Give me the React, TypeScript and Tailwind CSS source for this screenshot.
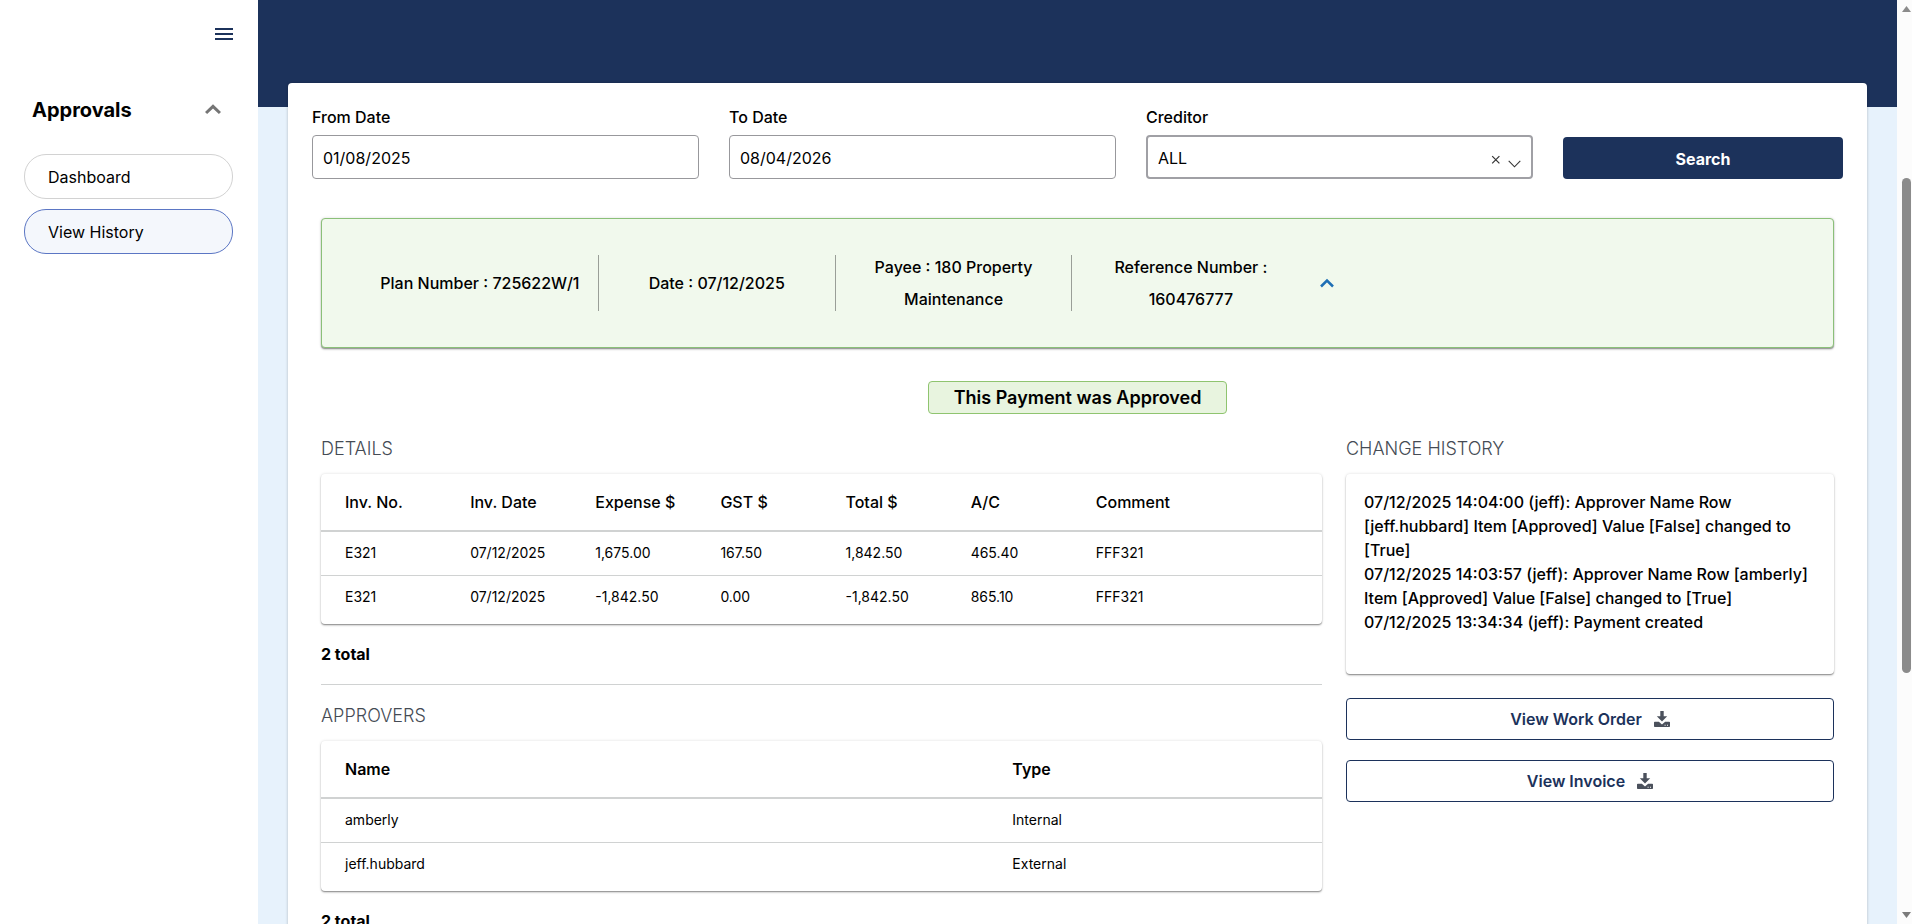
import { useState } from 'react';
import type { ReactNode } from 'react';
import clsx from 'clsx';

const invoices = [
    ['E321', '07/12/2025', '1,675.00', '167.50', '1,842.50', '465.40', 'FFF321'],
    ['E321', '07/12/2025', '-1,842.50', '0.00', '-1,842.50', '865.10', 'FFF321'],
];

const approvers = [
    ['amberly', 'Internal'],
    ['jeff.hubbard', 'External'],
];

const history = [
    '07/12/2025 14:04:00 (jeff): Approver Name Row [jeff.hubbard] Item [Approved] Value [False] changed to [True]',
    '07/12/2025 14:03:57 (jeff): Approver Name Row [amberly] Item [Approved] Value [False] changed to [True]',
    '07/12/2025 13:34:34 (jeff): Payment created',
];

const cardShadow = 'shadow-[0_1px_1px_rgba(0,0,0,0.3),0_2px_2px_rgba(0,0,0,0.12),0_0_3px_rgba(0,0,0,0.14)]';

function DownloadIcon() {
    return (
        <svg viewBox="0 0 16 16" className="size-4 fill-[#4b515c]" aria-hidden="true">
            <path d="M6.3 0h3.4v5.2h3.5L8 10.4 2.8 5.2h3.5z" />
            <path
                fillRule="evenodd"
                d="M.8 10.8h4.1L8 13.4l3.1-2.6h4.1q.8 0 .8.8v3.6q0 .8-.8.8H.8q-.8 0-.8-.8v-3.6q0-.8.8-.8zM10.6 13.8v1h1v-1zM13 13.8v1h1v-1z"
            />
        </svg>
    );
}

function SidebarLink({ active, children }: { active?: boolean; children: ReactNode }) {
    return (
        <a
            href="#"
            aria-current={active ? 'page' : undefined}
            className={clsx(
                'flex h-[45px] items-center rounded-[22px] border px-[23px] text-black',
                active ? 'border-[#5b76c4] bg-[#f4f7fc]' : 'border-[#d2d2d2] bg-white'
            )}
        >
            {children}
        </a>
    );
}

function Sidebar() {
    const [open, setOpen] = useState(true);

    return (
        <aside className="w-[258px] shrink-0 bg-white pt-[22px] pr-[25px] pl-6">
            <div className="flex justify-end">
                <button type="button" aria-label="Toggle menu" className="-mr-[3px]">
                    <svg viewBox="0 0 24 24" className="size-6 fill-[#1c325b]" aria-hidden="true">
                        <path d="M3 6h18v2H3zM3 11h18v2H3zM3 16h18v2H3z" />
                    </svg>
                </button>
            </div>
            <button
                type="button"
                onClick={() => setOpen(!open)}
                className="mt-12 flex w-full items-center justify-between px-2"
            >
                <span className="text-xl leading-8 font-bold">Approvals</span>
                <svg viewBox="0 0 24 24" className="size-6 fill-[#757575]" aria-hidden="true">
                    <path d="M12 6.2l-8 7.8 2.1 2.1L12 10.4l5.9 5.7L20 14z" />
                </svg>
            </button>
            {open && (
                <nav className="mt-7 flex flex-col gap-[10px]">
                    <SidebarLink>Dashboard</SidebarLink>
                    <SidebarLink active>View History</SidebarLink>
                </nav>
            )}
        </aside>
    );
}

function DateField({ id, label, value }: { id: string; label: string; value: string }) {
    return (
        <div className="flex flex-col gap-[6px]">
            <label htmlFor={id} className="font-medium">
                {label}
            </label>
            <input
                id={id}
                type="text"
                defaultValue={value}
                className="h-11 w-full rounded-[4px] border border-[#98989c] bg-white px-[10px] pt-[2px]"
            />
        </div>
    );
}

function Filters() {
    return (
        <form className="grid grid-cols-[387fr_387fr_387fr_280fr] items-end gap-[30px]">
            <DateField id="from-date" label="From Date" value="01/08/2025" />
            <DateField id="to-date" label="To Date" value="08/04/2026" />
            <div className="flex flex-col gap-[6px]">
                <label htmlFor="creditor" className="font-medium">
                    Creditor
                </label>
                <div className="relative">
                    <select
                        id="creditor"
                        className="block h-11 w-full appearance-none rounded-[4px] border-2 border-[#a0a0a5] bg-white px-[10px] pt-[2px]"
                    >
                        <option>ALL</option>
                    </select>
                    <div className="pointer-events-none absolute inset-y-0 right-3 flex items-center gap-[7px]">
                        <svg viewBox="0 0 10 10" className="mt-[6px] size-[10px] fill-none stroke-[#333]" aria-hidden="true">
                            <path d="M1.2 1.2l7.2 7.2M8.4 1.2L1.2 8.4" strokeWidth="1.2" />
                        </svg>
                        <svg viewBox="0 0 13 8" className="mt-[14px] h-2 w-[13px] fill-none stroke-[#333]" aria-hidden="true">
                            <path d="M.7.8l5.8 6 5.8-6" strokeWidth="1.1" />
                        </svg>
                    </div>
                </div>
            </div>
            <button type="button" className="h-[42px] rounded-[4px] bg-[#1c325b] pt-[2px] font-bold text-white">
                Search
            </button>
        </form>
    );
}

function PaymentSummary() {
    const cell = 'flex h-14 items-center justify-center';
    const divider = 'border-r border-[#9a9f98]';

    return (
        <section
            className={clsx(
                'grid grid-cols-6 items-center rounded-[4px] border border-[#8bc079] bg-[#f1f9ed] py-8 pr-[50px] pl-10 text-center leading-8 font-medium',
                cardShadow
            )}
        >
            <div className={clsx(cell, divider, 'whitespace-nowrap')}>Plan Number : 725622W/1</div>
            <div className={clsx(cell, divider, 'whitespace-nowrap')}>Date : 07/12/2025</div>
            <div className={clsx(cell, divider, 'px-8')}>Payee : 180 Property Maintenance</div>
            <div className="flex items-center justify-center px-8">Reference Number : 160476777</div>
            <button type="button" aria-label="Collapse payment" className="ml-[10px] justify-self-start">
                <svg viewBox="0 0 16 16" className="size-4 fill-none stroke-[#1f6fb5]" aria-hidden="true">
                    <path d="M2 11.5l6-6 6 6" strokeWidth="2.5" />
                </svg>
            </button>
        </section>
    );
}

function SectionTitle({ children }: { children: ReactNode }) {
    return <h2 className="text-lg leading-7 font-light text-[#454b54] uppercase">{children}</h2>;
}

function DataTable({ headers, rows, wide }: { headers: string[]; rows: string[][]; wide?: boolean }) {
    return (
        <>
            <div className={clsx('mt-[11px] overflow-hidden rounded-[4px] bg-white pb-[5px]', cardShadow)}>
                <table className="w-full table-fixed text-left">
                    <colgroup>
                        {headers.map((header, i) => (
                            <col
                                key={header}
                                className={clsx(wide ? i === 0 && 'w-2/3' : i < headers.length - 1 && 'w-[12.5%]')}
                            />
                        ))}
                    </colgroup>
                    <thead>
                        <tr className="h-[57px] border-b-2 border-[#d0d2d2]">
                            {headers.map((header) => (
                                <th key={header} className={clsx('pl-6', wide ? 'font-semibold' : 'font-medium')}>
                                    {header}
                                </th>
                            ))}
                        </tr>
                    </thead>
                    <tbody>
                        {rows.map((row, i) => (
                            <tr key={i} className="h-11 border-b border-[#d0d2d2] last:border-b-0">
                                {row.map((value, j) => (
                                    <td key={j} className="pl-6 text-sm">
                                        {value}
                                    </td>
                                ))}
                            </tr>
                        ))}
                    </tbody>
                </table>
            </div>
            <p className="mt-[18px] font-bold">{rows.length} total</p>
        </>
    );
}

function DocumentButton({ children }: { children: ReactNode }) {
    return (
        <button
            type="button"
            className="flex h-[42px] w-full items-center justify-center gap-3 rounded-[4px] border border-[#1c325b] bg-white font-semibold text-[#1c325b]"
        >
            {children}
            <DownloadIcon />
        </button>
    );
}

function ScrollBar() {
    return (
        <div className="flex w-[15px] shrink-0 flex-col items-center bg-[#fcfcfc] py-[6px] pl-1" aria-hidden="true">
            <svg viewBox="0 0 9 6" className="h-[6px] w-[9px] fill-[#8b8b8b]">
                <path d="M4.5 0L9 6H0z" />
            </svg>
            <div className="grow-[166]" />
            <div className="w-[9px] grow-[495] rounded-full bg-[#8b8b8b]" />
            <div className="grow-[239]" />
            <svg viewBox="0 0 9 6" className="h-[6px] w-[9px] fill-[#7b7b7b]">
                <path d="M4.5 6L9 0H0z" />
            </svg>
        </div>
    );
}

export default function App() {
    return (
        <div className="flex h-screen overflow-hidden bg-white font-['Inter','Liberation_Sans',sans-serif] text-base text-black">
            <Sidebar />
            <main className="min-w-0 grow bg-[#e7f2fc]">
                <div className="h-[107px] bg-[#1c325b]" />
                <div className="relative mx-[30px] -mt-6 min-h-full rounded-[4px] bg-white px-6 pt-[22px] shadow-[0_0_3px_rgba(0,0,0,0.25)]">
                    <Filters />
                    <div className="mt-[39px] px-[9px]">
                        <PaymentSummary />
                        <div className="mt-[33px] flex justify-center">
                            <p className="rounded-[4px] border border-[#8fc46f] bg-[#e8f4df] px-[25px] py-[3px] text-lg leading-[25px] font-semibold">
                                This Payment was Approved
                            </p>
                        </div>
                        <div className="mt-[21px] grid grid-cols-[1001fr_488fr] gap-6">
                            <div>
                                <SectionTitle>Details</SectionTitle>
                                <DataTable
                                    headers={['Inv. No.', 'Inv. Date', 'Expense $', 'GST $', 'Total $', 'A/C', 'Comment']}
                                    rows={invoices}
                                />
                                <hr className="mt-[18px] mb-[17px] border-[#d0d2d2]" />
                                <SectionTitle>Approvers</SectionTitle>
                                <DataTable headers={['Name', 'Type']} rows={approvers} wide />
                            </div>
                            <div>
                                <SectionTitle>Change History</SectionTitle>
                                <div
                                    className={clsx(
                                        'mt-[11px] min-h-[200px] rounded-[4px] bg-white px-[18px] pt-4 font-medium',
                                        cardShadow
                                    )}
                                >
                                    {history.map((entry) => (
                                        <p key={entry}>{entry}</p>
                                    ))}
                                </div>
                                <div className="mt-6 flex flex-col gap-5">
                                    <DocumentButton>View Work Order</DocumentButton>
                                    <DocumentButton>View Invoice</DocumentButton>
                                </div>
                            </div>
                        </div>
                    </div>
                </div>
            </main>
            <ScrollBar />
        </div>
    );
}
